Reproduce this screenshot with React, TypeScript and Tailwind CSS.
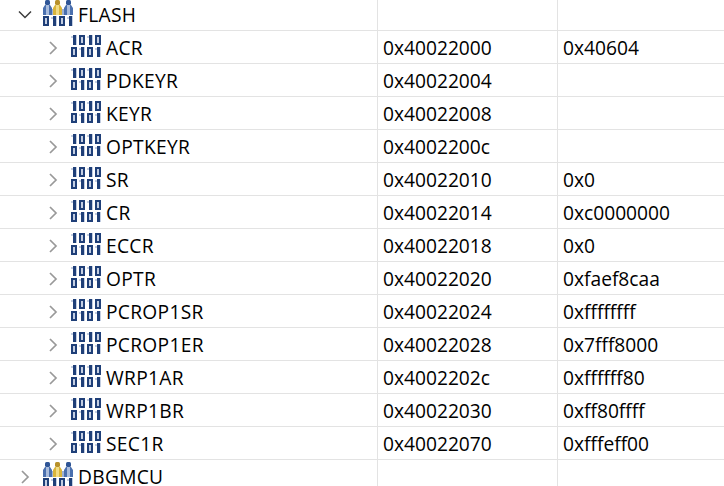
import React from "react";

const rows: [string, string, string][] = [
  ["ACR", "0x40022000", "0x40604"],
  ["PDKEYR", "0x40022004", ""],
  ["KEYR", "0x40022008", ""],
  ["OPTKEYR", "0x4002200c", ""],
  ["SR", "0x40022010", "0x0"],
  ["CR", "0x40022014", "0xc0000000"],
  ["ECCR", "0x40022018", "0x0"],
  ["OPTR", "0x40022020", "0xfaef8caa"],
  ["PCROP1SR", "0x40022024", "0xffffffff"],
  ["PCROP1ER", "0x40022028", "0x7fff8000"],
  ["WRP1AR", "0x4002202c", "0xffffff80"],
  ["WRP1BR", "0x40022030", "0xff80ffff"],
  ["SEC1R", "0x40022070", "0xfffeff00"],
];

const DARK = "#1f3f78";
const PALE = "#c3cee2";

function One({ x, y }: { x: number; y: number }) {
  return (
    <>
      <rect x={x} y={y + 1} width={2} height={2} fill={PALE} />
      <rect x={x + 2} y={y} width={3} height={10} fill={DARK} />
      <rect x={x + 5} y={y} width={1} height={10} fill={PALE} />
    </>
  );
}
function Zero({ x, y }: { x: number; y: number }) {
  return (
    <>
      <rect x={x} y={y} width={6} height={10} fill={DARK} />
      <rect x={x + 2} y={y + 2} width={2} height={6} fill={PALE} />
    </>
  );
}
function Bits({ y, bits }: { y: number; bits: string }) {
  return (
    <>
      {bits.split("").map((b, i) =>
        b === "1" ? <One key={i} x={i * 8} y={y} /> : <Zero key={i} x={i * 8} y={y} />
      )}
    </>
  );
}
function RegIcon() {
  return (
    <svg width="30" height="24" viewBox="0 0 30 24" className="shrink-0">
      <Bits y={0} bits="1010" />
      <Bits y={12} bits="0101" />
    </svg>
  );
}
function Person({ x, head, body, mid }: { x: number; head: string; body: string; mid: string }) {
  return (
    <>
      <rect x={x + 2} y={0} width={5} height={5} rx={1.5} fill={head} />
      <path d={`M${x} 15v-7l2-3h5l2 3v7z`} fill={body} />
      <rect x={x + 3} y={5} width={3} height={10} fill={mid} />
    </>
  );
}
function GroupIcon() {
  return (
    <svg width="30" height="28" viewBox="0 0 30 28" className="shrink-0">
      <rect x="0" y="9" width="30" height="6" fill="#9fb2d4" />
      <Person x={0} head="#2f5596" body="#4a6fae" mid="#a9bcdc" />
      <Person x={10} head="#b8912a" body="#d9b53c" mid="#f2dc84" />
      <Person x={21} head="#2f5596" body="#4a6fae" mid="#a9bcdc" />
      <Bits y={16} bits="0101" />
    </svg>
  );
}
function Chevron({ open }: { open?: boolean }) {
  return open ? (
    <svg width="14" height="14" viewBox="0 0 14 14" fill="none" stroke="#3c3c3c" strokeWidth="1.5" className="mt-[2px] shrink-0">
      <path d="M1 3.5l6 6 6-6" />
    </svg>
  ) : (
    <svg width="14" height="14" viewBox="0 0 14 14" fill="none" stroke="#999999" strokeWidth="1.7" className="mt-[2px] shrink-0">
      <path d="M4 1l6 6-6 6" />
    </svg>
  );
}
function Row({ depth, icon, name, addr, val, open }: { depth: number; icon: "g" | "r"; name: string; addr: string; val: string; open?: boolean }) {
  return (
    <div className="flex h-[33px] shrink-0 border-b border-[#e3e3e3] text-[19.2px] leading-[34px] text-black">
      <div className={`flex w-[377px] shrink-0 items-center ${depth === 0 ? "pl-[18px]" : "pl-[46px]"}`}>
        <Chevron open={open} />
        <div className="ml-[11px] flex">{icon === "g" ? <GroupIcon /> : <RegIcon />}</div>
        <span className="ml-[5px] mt-[2px] tracking-[0.3px]">{name}</span>
      </div>
      <div className="w-[180px] shrink-0 border-l border-[#e3e3e3] pl-[5px]">{addr}</div>
      <div className="flex-1 border-l border-[#e3e3e3] pl-[5px]">{val}</div>
    </div>
  );
}

export default function App() {
  return (
    <div className="flex h-[486px] w-[724px] flex-col overflow-hidden bg-white font-['Open_Sans','Noto_Sans',sans-serif]">
      <div className="-mt-[2px] flex flex-col">
        <Row depth={0} icon="g" name="FLASH" addr="" val="" open />
        {rows.map((r) => (
          <Row key={r[0]} depth={1} icon="r" name={r[0]} addr={r[1]} val={r[2]} />
        ))}
        <Row depth={0} icon="g" name="DBGMCU" addr="" val="" />
      </div>
    </div>
  );
}
